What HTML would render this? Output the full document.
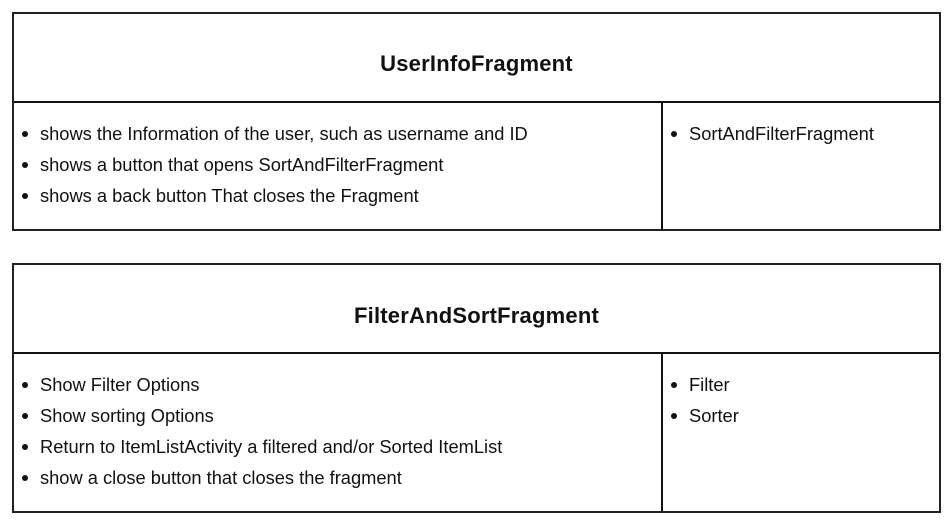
<!DOCTYPE html>
<html><head><style>
body{margin:0;width:948px;height:521px;background:#fff;font-family:"Liberation Sans",sans-serif;color:#111;position:relative;overflow:hidden}
.box{position:absolute;left:12px;width:925px;border:2px solid #222;box-sizing:content-box}
.title{position:absolute;left:0;right:0;text-align:center;font-size:22px;font-weight:bold;letter-spacing:0.2px}
.hr{position:absolute;left:0;right:0;height:2px;background:#111}
.vr{position:absolute;left:647px;width:2px;background:#111}
.li{position:absolute;font-size:18.3px;white-space:nowrap}
.li::before{content:"";position:absolute;left:-18px;top:8px;width:6px;height:6px;border-radius:50%;background:#111}
</style></head><body>
<div class="box" style="top:12px;height:215px">
 <div class="title" style="top:37px">UserInfoFragment</div>
 <div class="hr" style="top:87px"></div>
 <div class="vr" style="top:87px;height:128px"></div>
 <div class="li" style="left:26px;top:109px">shows the Information of the user, such as username and ID</div>
 <div class="li" style="left:26px;top:140px">shows a button that opens SortAndFilterFragment</div>
 <div class="li" style="left:26px;top:171px">shows a back button That closes the Fragment</div>
 <div class="li" style="left:675px;top:109px">SortAndFilterFragment</div>
</div>
<div class="box" style="top:263px;height:246px">
 <div class="title" style="top:38px">FilterAndSortFragment</div>
 <div class="hr" style="top:87px"></div>
 <div class="vr" style="top:87px;height:159px"></div>
 <div class="li" style="left:26px;top:109px">Show Filter Options</div>
 <div class="li" style="left:26px;top:140px">Show sorting Options</div>
 <div class="li" style="left:26px;top:171px">Return to ItemListActivity a filtered and/or Sorted ItemList</div>
 <div class="li" style="left:26px;top:202px">show a close button that closes the fragment</div>
 <div class="li" style="left:675px;top:109px">Filter</div>
 <div class="li" style="left:675px;top:140px">Sorter</div>
</div>
</body></html>
